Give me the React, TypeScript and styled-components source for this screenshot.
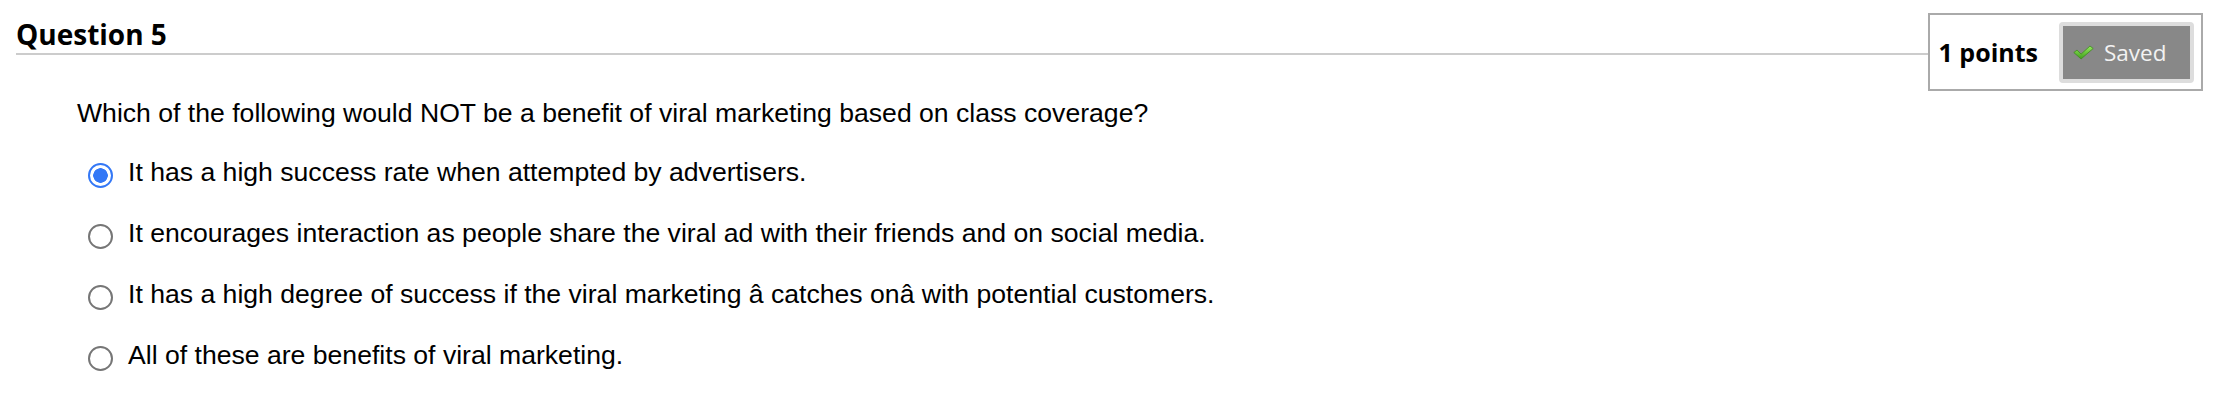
import styled, { createGlobalStyle } from 'styled-components'

const GlobalStyle = createGlobalStyle`
  body {
    margin: 0;
    background: #ffffff;
  }
`

const Page = styled.div`
  width: 2232px;
  height: 410px;
  box-sizing: border-box;
  padding: 0 29px 0 16px;
  background: #ffffff;
`

const Header = styled.div`
  display: flex;
  align-items: flex-start;
  height: 91px;
`

const TitleBar = styled.div`
  flex: 1;
  height: 55px;
  box-sizing: border-box;
  display: flex;
  align-items: flex-end;
  padding-bottom: 5px;
  border-bottom: 2px solid #cccccc;
`

const Title = styled.h2`
  margin: 0;
  font-family: 'Open Sans', sans-serif;
  font-weight: 700;
  font-size: 28px;
  line-height: 28px;
  color: #000;
`

const PointsBox = styled.div`
  margin-top: 13px;
  height: 78px;
  box-sizing: border-box;
  border: 2px solid #aaaaaa;
  display: flex;
  align-items: center;
  gap: 21px;
  padding: 0 7px 0 9px;
`

const Points = styled.span`
  font-family: 'Open Sans', sans-serif;
  font-weight: 700;
  font-size: 25px;
  color: #000;
`

const SavedBadge = styled.div`
  width: 135px;
  height: 61px;
  box-sizing: border-box;
  border: 4px solid #dddddd;
  border-radius: 4px;
  background: #888888;
  display: flex;
  align-items: center;
  gap: 10px;
  padding-left: 10px;
  font-family: 'Open Sans', sans-serif;
  font-size: 22.5px;
  color: #f2f2f2;
`

const Body = styled.div`
  padding-left: 61px;
  font-family: 'Liberation Sans', Arial, sans-serif;
  font-size: 26.6px;
  line-height: 27px;
  color: #000;
`

const Prompt = styled.p`
  margin: 9px 0 32px;
`

const Options = styled.div`
  display: flex;
  flex-direction: column;
  gap: 32px;
`

const Option = styled.label`
  display: flex;
  align-items: flex-start;
  gap: 15px;
  padding-left: 11px;
`

const Radio = styled.span<{ $checked?: boolean }>`
  width: 25px;
  height: 25px;
  margin-top: 4px;
  box-sizing: border-box;
  border-radius: 50%;
  flex-shrink: 0;
  border: ${p => (p.$checked ? '2.5px solid #3478f6' : '2px solid #767676')};
  background: ${p =>
    p.$checked
      ? 'radial-gradient(circle, #3478f6 0 7px, #ffffff 7.5px)'
      : '#ffffff'};
`

const CheckIcon = () => (
  <svg width="21" height="15" viewBox="0 0 26 18">
    <defs>
      <linearGradient id="chk" x1="0" y1="0" x2="0" y2="1">
        <stop offset="0" stopColor="#96ec5e" />
        <stop offset="1" stopColor="#3f9e1c" />
      </linearGradient>
    </defs>
    <path
      d="M1 9 L5 6 L10 11 L21 1 L25 4 L10 17 Z"
      fill="url(#chk)"
      stroke="#3f8a22"
      strokeWidth="1"
      strokeLinejoin="round"
    />
  </svg>
)

const answers = [
  'It has a high success rate when attempted by advertisers.',
  'It encourages interaction as people share the viral ad with their friends and on social media.',
  'It has a high degree of success if the viral marketing \u00e2 catches on\u00e2 with potential customers.',
  'All of these are benefits of viral marketing.',
]

const App = () => {
  return (
    <Page>
      <GlobalStyle />
      <Header>
        <TitleBar>
          <Title>Question 5</Title>
        </TitleBar>
        <PointsBox>
          <Points>1 points</Points>
          <SavedBadge>
            <CheckIcon />
            Saved
          </SavedBadge>
        </PointsBox>
      </Header>
      <Body>
        <Prompt>
          Which of the following would NOT be a benefit of viral marketing based on class coverage?
        </Prompt>
        <Options>
          {answers.map((a, i) => (
            <Option key={i}>
              <Radio $checked={i === 0} />
              <span>{a}</span>
            </Option>
          ))}
        </Options>
      </Body>
    </Page>
  )
}

export default App
